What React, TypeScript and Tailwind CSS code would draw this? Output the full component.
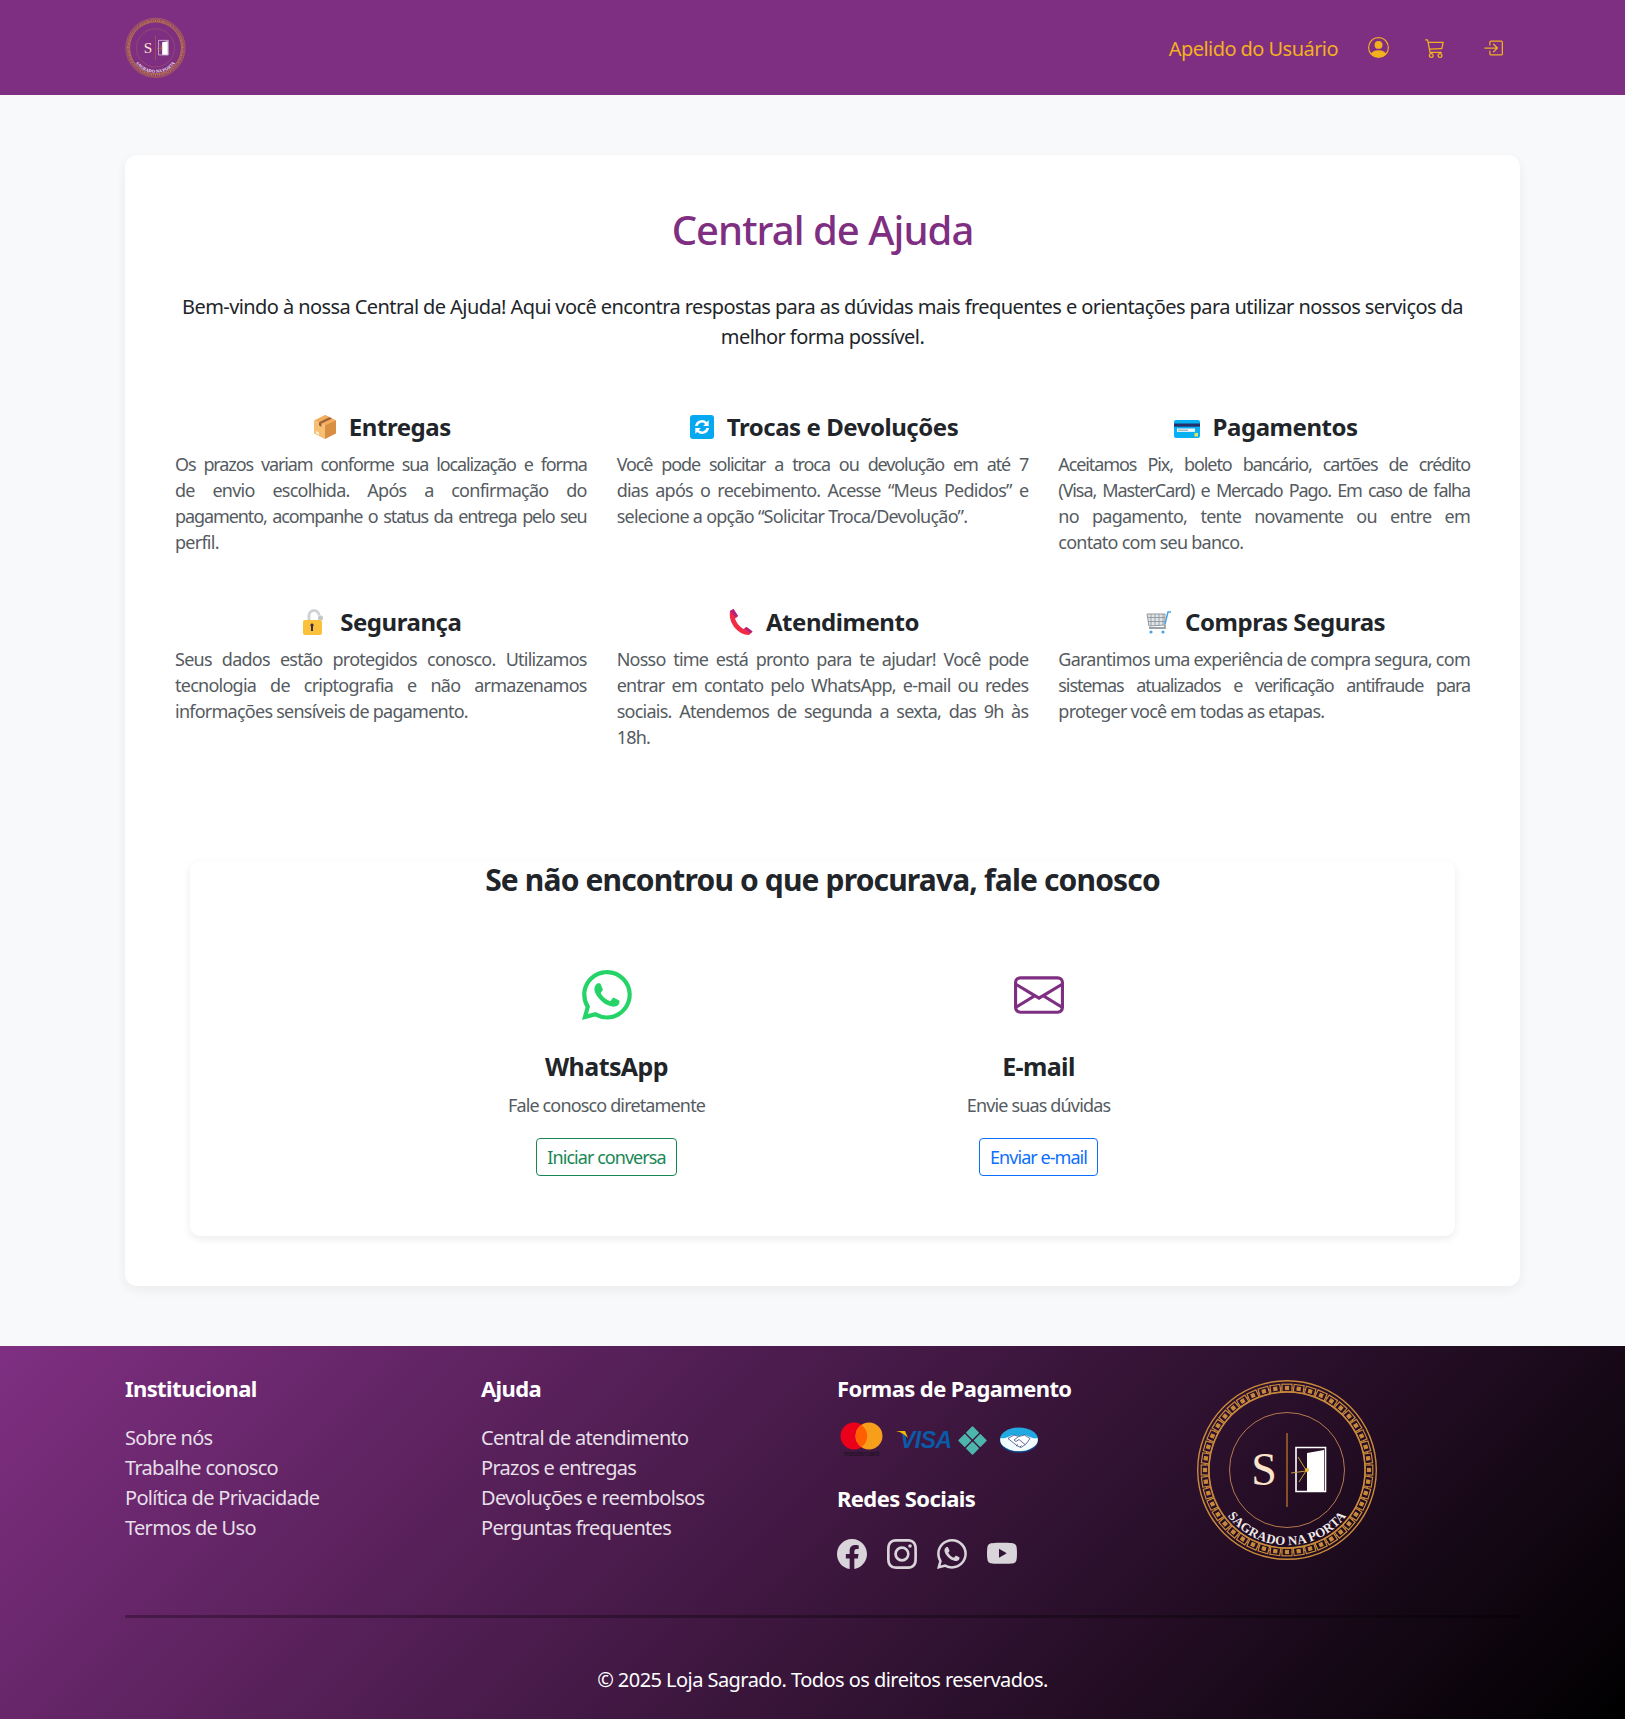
import React from "react";

const WA_PATH = "M13.601 2.326A7.85 7.85 0 0 0 7.994 0C3.627 0 .068 3.558.064 7.926c0 1.399.366 2.76 1.057 3.965L0 16l4.204-1.102a7.9 7.9 0 0 0 3.79.965h.004c4.368 0 7.926-3.558 7.93-7.93A7.9 7.9 0 0 0 13.6 2.326zM7.994 14.521a6.6 6.6 0 0 1-3.356-.92l-.24-.144-2.494.654.666-2.433-.156-.251a6.56 6.56 0 0 1-1.007-3.505c0-3.626 2.957-6.584 6.591-6.584a6.56 6.56 0 0 1 4.66 1.931 6.56 6.56 0 0 1 1.928 4.66c-.004 3.639-2.961 6.592-6.592 6.592m3.615-4.934c-.197-.099-1.17-.578-1.353-.646-.182-.065-.315-.099-.445.099-.133.197-.513.646-.627.775-.114.133-.232.148-.43.05-.197-.1-.836-.308-1.592-.985-.59-.525-.985-1.175-1.103-1.372-.114-.198-.011-.304.088-.403.087-.088.197-.232.296-.346.1-.114.133-.198.198-.33.065-.134.034-.248-.015-.347-.05-.099-.445-1.076-.612-1.47-.16-.389-.323-.335-.445-.34-.114-.007-.247-.007-.38-.007a.73.73 0 0 0-.529.247c-.182.198-.691.677-.691 1.654s.71 1.916.81 2.049c.098.133 1.394 2.132 3.383 2.992.47.205.84.326 1.129.418.475.152.904.129 1.246.08.38-.058 1.171-.48 1.338-.943.164-.464.164-.86.114-.943-.049-.084-.182-.133-.38-.232";

const KEY_UNITS = Array.from({ length: 44 }, (_, i) => (i * 360) / 44);

function Logo({ size, id }: { size: number; id: string }) {
  return (
    <svg width={size} height={size} viewBox="0 0 220 220" className="block">
      <defs>
        <path id={`arc-${id}`} d="M 33.1 118 A 75 75 0 0 0 180.9 118" fill="none" />
      </defs>
      <circle cx="107" cy="105" r="89.3" fill="none" stroke="#c98a3c" strokeWidth="1.4" />
      <circle cx="107" cy="105" r="78" fill="none" stroke="#c98a3c" strokeWidth="1.4" />
      {KEY_UNITS.map((a) => (
        <g key={a} transform={`rotate(${a} 107 105)`} fill="none" stroke="#c98a3c">
          <rect x="102" y="19.2" width="10" height="7.6" strokeWidth="1.2" />
          <rect x="105.4" y="21.4" width="3.2" height="3.2" strokeWidth="1" fill="#c98a3c" />
          <path d="M112 23h1.4" strokeWidth="1.2" />
        </g>
      ))}
      <circle cx="107" cy="105" r="57.5" fill="none" stroke="#b5784f" strokeWidth="1" />
      <text x="84" y="120" textAnchor="middle" fontFamily="'Liberation Serif', serif" fontSize="46" fill="#fbe3cb">S</text>
      <rect x="106.4" y="68" width="1.2" height="74" fill="#c77d28" />
      <path d="M116 82.5h29.5v44h-29.5z" fill="none" stroke="#fff" strokeWidth="1.6" />
      <path d="M127 88l17-3v41h-17z" fill="#fff" />
      <path d="M126 105l-8-13M126 106l-15 2M126 106l-7 11" stroke="#c9983f" strokeWidth="1" />
      <circle cx="127" cy="105" r="2" fill="#e8b93f" />
      <text fontFamily="'Liberation Serif', serif" fontSize="13" fontWeight="700" fill="#efe9ea" letterSpacing="0.2">
        <textPath href={`#arc-${id}`} startOffset="50%" textAnchor="middle">SAGRADO NA PORTA</textPath>
      </text>
    </svg>
  );
}

function EmojiBox() {
  return (
    <svg width="24" height="26" viewBox="0 0 24 26" className="shrink-0">
      <path d="M12 1 23 6.5v13L12 25z" fill="#d98f43" />
      <path d="M12 11.5V25L1 19.5v-13z" fill="#f6bf72" />
      <path d="M1 6.5 12 1l11 5.5L12 11.5z" fill="#f2ae5c" />
      <path d="M16.5 3.2 19 4.5 8.5 9.5 6 8.2z" fill="#9a5f38" />
      <path d="M6 8.2l2.5 1.3v3.2L6 11.4z" fill="#9a5f38" />
      <path d="M3 17l3 1.4v2.6L3 19.6z" fill="#fdf1de" />
    </svg>
  );
}
function EmojiSwap() {
  return (
    <svg width="26" height="26" viewBox="0 0 26 26" className="shrink-0">
      <rect x="1" y="1" width="24" height="24" rx="3" fill="#06a9f0" />
      <path d="M6 12a7 7 0 0 1 11.8-4l1.9-1.7V12h-5.6l2-2A4.4 4.4 0 0 0 8.6 12z" fill="#fff" />
      <path d="M20 14a7 7 0 0 1-11.8 4l-1.9 1.7V14h5.6l-2 2a4.4 4.4 0 0 0 7.5-2z" fill="#fff" />
    </svg>
  );
}
function EmojiCard() {
  return (
    <svg width="28" height="26" viewBox="0 0 28 26" className="shrink-0">
      <rect x="1" y="6" width="26" height="18" rx="2" fill="#06b0f2" />
      <rect x="1" y="9.5" width="26" height="3.2" fill="#25306b" />
      <rect x="4" y="14.5" width="18" height="3.4" fill="#f2f7fb" />
      <rect x="5" y="15.7" width="10" height="1" fill="#8b98a5" />
      <rect x="21.5" y="19" width="3.5" height="3.5" fill="#e6e45a" />
    </svg>
  );
}
function EmojiLock() {
  return (
    <svg width="26" height="28" viewBox="0 0 26 28" className="shrink-0">
      <path d="M7 13V7.500a5 5 0 0 1 10 0" fill="none" stroke="#d0d3d6" strokeWidth="3" />
      <rect x="16" y="7.500" width="5" height="5" rx="2" fill="#c3c7cb" />
      <rect x="1" y="12" width="19" height="15" rx="2" fill="#fcc13a" />
      <path d="M10 15.500a1.700 1.700 0 0 1 1 3V23H9v-4.500a1.700 1.700 0 0 1 1-3z" fill="#3a2c4a" />
    </svg>
  );
}
function EmojiPhone() {
  return (
    <svg width="26" height="28" viewBox="0 0 26 28" className="shrink-0">
      <path d="M2 3 5.500 1 10 8l-3 2.500c1 4 5.500 9 8.500 10.500l3-2 6 4.500-3.500 3.500C10 27 0 15 2 3z" fill="#f02d45" />
      <path d="M2 3 5.500 1 10 8l-2 1.700z" fill="#b4237e" />
      <path d="M18.500 19l6 4.500-2 2-6-5z" fill="#b4237e" />
    </svg>
  );
}
function EmojiCart() {
  return (
    <svg width="28" height="27" viewBox="0 0 28 27" className="shrink-0">
      <path d="M2 5h18v11L4 17z" fill="#e2e5e8" stroke="#8f979e" strokeWidth="1" />
      <path d="M6 5v12M10 5v11.500M14 5v11M18 5v11M3 8.500h17M3 12.500h17" stroke="#8f979e" strokeWidth="0.9" />
      <path d="M20 16v3H4" fill="none" stroke="#9aa1a8" strokeWidth="1.8" />
      <path d="M20 15 23 3h3" fill="none" stroke="#4da3e0" strokeWidth="1.5" />
      <circle cx="6" cy="23" r="1.600" fill="#4da3e0" />
      <circle cx="18" cy="23" r="1.600" fill="#4da3e0" />
    </svg>
  );
}

const faqs: { icon: React.ReactNode; title: string; lines: string[] }[] = [
  { icon: <EmojiBox />, title: "Entregas", lines: ["Os prazos variam conforme sua localização e forma", "de envio escolhida. Após a confirmação do", "pagamento, acompanhe o status da entrega pelo seu", "perfil."] },
  { icon: <EmojiSwap />, title: "Trocas e Devoluções", lines: ["Você pode solicitar a troca ou devolução em até 7", "dias após o recebimento. Acesse “Meus Pedidos” e", "selecione a opção “Solicitar Troca/Devolução”."] },
  { icon: <EmojiCard />, title: "Pagamentos", lines: ["Aceitamos Pix, boleto bancário, cartões de crédito", "(Visa, MasterCard) e Mercado Pago. Em caso de falha", "no pagamento, tente novamente ou entre em", "contato com seu banco."] },
  { icon: <EmojiLock />, title: "Segurança", lines: ["Seus dados estão protegidos conosco. Utilizamos", "tecnologia de criptografia e não armazenamos", "informações sensíveis de pagamento."] },
  { icon: <EmojiPhone />, title: "Atendimento", lines: ["Nosso time está pronto para te ajudar! Você pode", "entrar em contato pelo WhatsApp, e-mail ou redes", "sociais. Atendemos de segunda a sexta, das 9h às", "18h."] },
  { icon: <EmojiCart />, title: "Compras Seguras", lines: ["Garantimos uma experiência de compra segura, com", "sistemas atualizados e verificação antifraude para", "proteger você em todas as etapas."] },
];

function FooterLinks({ title, links }: { title: string; links: string[] }) {
  return (
    <div className="w-[356px] shrink-0">
      <h5 className="text-[22px] leading-[26px] font-bold tracking-[-0.6px] text-white mb-[22px]">{title}</h5>
      <ul className="text-[#e6dfe8] text-[20px] leading-[30px] tracking-[-0.7px]">
        {links.map((l) => (
          <li key={l}>{l}</li>
        ))}
      </ul>
    </div>
  );
}

export default function App() {
  return (
    <div className="min-h-[1719px] bg-[#f8f9fa] font-['Noto_Sans','Open_Sans',sans-serif] text-[#212529] flex flex-col">
      <header className="h-[95px] bg-[#7f2f82] pl-[120px] pr-[122px] flex items-center justify-between">
        <div className="mt-[4px]">
          <Logo size={73} id="head" />
        </div>
        <nav className="flex items-center text-[#f2b01e]">
          <span className="text-[20px] leading-[30px] mt-[2px] tracking-[-0.55px] mr-[30px]">Apelido do Usuário</span>
          <svg width="21" height="21" viewBox="0 0 16 16" fill="currentColor" className="mr-[36px]">
            <path d="M11 6a3 3 0 1 1-6 0 3 3 0 0 1 6 0" />
            <path fillRule="evenodd" d="M0 8a8 8 0 1 1 16 0A8 8 0 0 1 0 8m8-7a7 7 0 0 0-5.468 11.37C3.242 11.226 4.805 10 8 10s4.757 1.225 5.468 2.37A7 7 0 0 0 8 1" />
          </svg>
          <svg width="20" height="20" viewBox="0 0 16 16" fill="currentColor" className="mr-[38px]">
            <path d="M0 1.5A.5.5 0 0 1 .5 1H2a.5.5 0 0 1 .485.379L2.89 3H14.5a.5.5 0 0 1 .49.598l-1 5a.5.5 0 0 1-.465.401l-9.397.472L4.415 11H13a.5.5 0 0 1 0 1H4a.5.5 0 0 1-.491-.408L2.01 3.607 1.61 2H.5a.5.5 0 0 1-.5-.5M3.102 4l.84 4.479 9.144-.459L13.89 4zM5 12a2 2 0 1 0 0 4 2 2 0 0 0 0-4m7 0a2 2 0 1 0 0 4 2 2 0 0 0 0-4m-7 1a1 1 0 1 1 0 2 1 1 0 0 1 0-2m7 0a1 1 0 1 1 0 2 1 1 0 0 1 0-2" />
          </svg>
          <svg width="20" height="20" viewBox="0 0 16 16" fill="currentColor">
            <path fillRule="evenodd" d="M6 3.5a.5.5 0 0 1 .5-.5h8a.5.5 0 0 1 .5.5v9a.5.5 0 0 1-.5.5h-8a.5.5 0 0 1-.5-.5v-2a.5.5 0 0 0-1 0v2A1.5 1.5 0 0 0 6.5 14h8a1.5 1.5 0 0 0 1.5-1.5v-9A1.5 1.5 0 0 0 14.5 2h-8A1.5 1.5 0 0 0 5 3.5v2a.5.5 0 0 0 1 0z" />
            <path fillRule="evenodd" d="M11.854 8.354a.5.5 0 0 0 0-.708l-3-3a.5.5 0 1 0-.708.708L10.293 7.5H1.5a.5.5 0 0 0 0 1h8.793l-2.147 2.146a.5.5 0 0 0 .708.708z" />
          </svg>
        </nav>
      </header>

      <main className="pl-[125px] pr-[105px] pt-[60px] pb-[60px]">
        <section className="bg-white rounded-[12px] shadow-[0_4px_12px_rgba(0,0,0,0.06)] h-[1131px] pt-[49px] px-[50px]">
          <h1 className="text-center text-[40px] leading-[52px] font-medium tracking-[-0.95px] text-[#7f2f82]">Central de Ajuda</h1>
          <p className="mt-[36px] text-center text-[20px] leading-[30px] tracking-[-0.58px]">
            Bem-vindo à nossa Central de Ajuda! Aqui você encontra respostas para as dúvidas mais frequentes e orientações para utilizar nossos serviços da melhor forma possível.
          </p>
          <div className="mt-[59px] grid grid-cols-3 gap-x-[30px]">
            {faqs.map((f) => (
              <article key={f.title} className="h-[195px] min-w-0">
                <h4 className="flex items-center justify-center gap-[12px] pl-[2px] text-[24px] leading-[32px] font-bold tracking-[-0.45px]">
                  {f.icon}
                  {f.title}
                </h4>
                <p className="mt-[8px] text-[18px] leading-[26px] tracking-[-0.75px] text-[#555b61]">
                  {f.lines.map((line, i) => (
                    <span
                      key={line}
                      className={
                        i === f.lines.length - 1
                          ? "block"
                          : line.length >= 49
                            ? "block tracking-[-1.1px] [text-align:justify] [text-align-last:justify]"
                            : "block [text-align:justify] [text-align-last:justify]"
                      }
                    >
                      {line}
                    </span>
                  ))}
                </p>
              </article>
            ))}
          </div>
          <div className="mt-[60px] mx-[15px] h-[375px] rounded-[10px] bg-white shadow-[0_3px_8px_rgba(0,0,0,0.08)] flex flex-col items-center">
            <h3 className="text-[30px] leading-[38px] font-bold tracking-[-0.85px] text-center">Se não encontrou o que procurava, fale conosco</h3>
            <div className="mt-[71px] w-full grid grid-cols-[432px_432px] justify-center">
              <div className="flex flex-col items-center">
                <svg width="50" height="50" viewBox="0 0 16 16" fill="#25d366"><path d={WA_PATH} /></svg>
                <h4 className="mt-[30px] text-[25px] leading-[32px] font-bold tracking-[-0.6px]">WhatsApp</h4>
                <p className="mt-[10px] text-[18px] leading-[27px] tracking-[-0.85px] text-[#555b61]">Fale conosco diretamente</p>
                <a className="mt-[19px] h-[38px] px-[10px] flex items-center rounded-[4px] border border-[#198754] text-[#198754] text-[18px] tracking-[-0.95px]">Iniciar conversa</a>
              </div>
              <div className="flex flex-col items-center">
                <svg width="50" height="50" viewBox="0 0 16 16" fill="#7f2f82">
                  <path d="M0 4a2 2 0 0 1 2-2h12a2 2 0 0 1 2 2v8a2 2 0 0 1-2 2H2a2 2 0 0 1-2-2zm2-1a1 1 0 0 0-1 1v.217l7 4.2 7-4.2V4a1 1 0 0 0-1-1zm13 2.383-4.708 2.825L15 11.105zm-.034 6.876-5.64-3.471L8 9.583l-1.326-.795-5.64 3.47A1 1 0 0 0 2 13h12a1 1 0 0 0 .966-.741M1 11.105l4.708-2.897L1 5.383z" />
                </svg>
                <h4 className="mt-[30px] text-[25px] leading-[32px] font-bold tracking-[-0.6px]">E-mail</h4>
                <p className="mt-[10px] text-[18px] leading-[27px] tracking-[-0.85px] text-[#555b61]">Envie suas dúvidas</p>
                <a className="mt-[19px] h-[38px] px-[10px] flex items-center rounded-[4px] border border-[#0d6efd] text-[#0d6efd] text-[18px] tracking-[-0.95px]">Enviar e-mail</a>
              </div>
            </div>
          </div>
        </section>
      </main>

      <footer className="h-[373px] bg-[linear-gradient(135deg,#7f2f82_0%,#000000_100%)] pl-[125px] pr-[105px] pt-[29px] text-white flex flex-col">
        <div className="flex h-[232px]">
          <FooterLinks title="Institucional" links={["Sobre nós", "Trabalhe conosco", "Política de Privacidade", "Termos de Uso"]} />
          <FooterLinks title="Ajuda" links={["Central de atendimento", "Prazos e entregas", "Devoluções e reembolsos", "Perguntas frequentes"]} />
          <div className="w-[356px] shrink-0">
            <h5 className="text-[22px] leading-[26px] font-bold tracking-[-0.6px] mb-[19px]">Formas de Pagamento</h5>
            <div className="flex items-center h-[40px] pl-[3px]">
              <svg width="44" height="36" viewBox="0 0 44 36" className="mr-[12px]">
                <circle cx="14" cy="14" r="13.500" fill="#eb001b" />
                <circle cx="29" cy="14" r="13.500" fill="#f79e1b" />
                <path d="M21.500 3a13.500 13.500 0 0 1 0 22 13.500 13.500 0 0 1 0-22z" fill="#ff5f00" />
                <text x="21.500" y="34" textAnchor="middle" fontFamily="'Liberation Sans', sans-serif" fontSize="7" fill="#17101c">mastercard</text>
              </svg>
              <span className="relative text-[#0a5aa8] font-['Liberation_Sans',sans-serif] italic font-bold text-[23px] tracking-[-0.5px] w-[51px] leading-none mr-[10px] pl-[4px]">
                VISA
                <svg width="14" height="8" viewBox="0 0 14 8" className="absolute left-0 top-[2px]"><path d="M0 0h9l3 7C9 4 5 1 0 0z" fill="#f7b600" /></svg>
              </span>
              <svg width="31" height="31" viewBox="0 0 30 30" className="mr-[12px]">
                <g fill="#4db6ac" stroke="#4db6ac" strokeWidth="1.500" strokeLinejoin="round">
                  <path d="M15 2l5.500 5.500L15 13 9.500 7.500z" />
                  <path d="M15 17l5.500 5.500L15 28l-5.500-5.500z" />
                  <path d="M2 15l5.500-5.500L13 15l-5.500 5.500z" />
                  <path d="M17 15l5.500-5.500L28 15l-5.500 5.500z" />
                </g>
              </svg>
              <svg width="38" height="26" viewBox="0 0 38 26">
                <ellipse cx="19" cy="14" rx="19" ry="12" fill="#22346f" />
                <ellipse cx="19" cy="12.500" rx="19" ry="12" fill="#23a9e1" />
                <path d="M.5 11c6 1.500 9-3 14-3l4.500 1 4.500-1c5 0 8 4.500 14 3 1 4-1 7-5 9.500-4 2-6 3.500-13.500 3.500S9.500 22.500 5.500 20.500C1.500 18 -.500 15 .5 11z" fill="#f4fbff" />
                <path d="M8 11.500 14 8l5 1.500L24.500 8 30 11.500l-4 5.500-5 3.500-3.500-1.500z" fill="#fff" stroke="#22346f" strokeWidth="0.7" />
                <path d="M18 10l-4 3 2 1.500 3-2 6 5M16 19l2-1.500M20 20l1.500-1.500" fill="none" stroke="#22346f" strokeWidth="0.7" />
              </svg>
            </div>
            <h5 className="mt-[25px] text-[22px] leading-[26px] font-bold tracking-[-0.6px]">Redes Sociais</h5>
            <div className="mt-[28px] flex gap-[20px] text-[#d9d3da]">
              <svg width="30" height="30" viewBox="0 0 16 16" fill="currentColor"><path d="M16 8.049c0-4.446-3.582-8.05-8-8.05C3.58 0-.002 3.603-.002 8.05c0 4.017 2.926 7.347 6.75 7.951v-5.625h-2.03V8.05H6.75V6.275c0-2.017 1.195-3.131 3.022-3.131.876 0 1.791.157 1.791.157v1.98h-1.009c-.993 0-1.303.621-1.303 1.258v1.51h2.218l-.354 2.326H9.25V16c3.824-.604 6.75-3.934 6.75-7.951" /></svg>
              <svg width="30" height="30" viewBox="0 0 16 16" fill="currentColor"><path d="M8 0C5.829 0 5.556.01 4.703.048 3.85.088 3.269.222 2.76.42a3.9 3.9 0 0 0-1.417.923A3.9 3.9 0 0 0 .42 2.76C.222 3.268.087 3.85.048 4.7.01 5.555 0 5.827 0 8.001c0 2.172.01 2.444.048 3.297.04.852.174 1.433.372 1.942.205.526.478.972.923 1.417.444.445.89.719 1.416.923.51.198 1.09.333 1.942.372C5.555 15.99 5.827 16 8 16s2.444-.01 3.298-.048c.851-.04 1.434-.174 1.943-.372a3.9 3.9 0 0 0 1.416-.923c.445-.445.718-.891.923-1.417.197-.509.332-1.09.372-1.942C15.99 10.445 16 10.173 16 8s-.01-2.445-.048-3.299c-.04-.851-.175-1.433-.372-1.941a3.9 3.9 0 0 0-.923-1.417A3.9 3.9 0 0 0 13.24.42c-.51-.198-1.092-.333-1.943-.372C10.443.01 10.172 0 7.998 0zm-.717 1.442h.718c2.136 0 2.389.007 3.232.046.78.035 1.204.166 1.486.275.373.145.64.319.92.599s.453.546.598.92c.11.281.24.705.275 1.485.039.843.047 1.096.047 3.231s-.008 2.389-.047 3.232c-.035.78-.166 1.203-.275 1.485a2.5 2.5 0 0 1-.599.919c-.28.28-.546.453-.92.598-.28.11-.704.24-1.485.276-.843.038-1.096.047-3.232.047s-2.39-.009-3.233-.047c-.78-.036-1.203-.166-1.485-.276a2.5 2.5 0 0 1-.92-.598 2.5 2.5 0 0 1-.6-.92c-.109-.281-.24-.705-.275-1.485-.038-.843-.046-1.096-.046-3.233s.008-2.388.046-3.231c.036-.78.166-1.204.276-1.486.145-.373.319-.64.599-.92s.546-.453.92-.598c.282-.11.705-.24 1.485-.276.738-.034 1.024-.044 2.515-.045zm4.988 1.328a.96.96 0 1 0 0 1.92.96.96 0 0 0 0-1.92m-4.27 1.122a4.109 4.109 0 1 0 0 8.217 4.109 4.109 0 0 0 0-8.217m0 1.441a2.667 2.667 0 1 1 0 5.334 2.667 2.667 0 0 1 0-5.334" /></svg>
              <svg width="30" height="30" viewBox="0 0 16 16" fill="currentColor"><path d={WA_PATH} /></svg>
              <svg width="30" height="30" viewBox="0 0 16 16" fill="currentColor"><path d="M8.051 1.999h.089c.822.003 4.987.033 6.11.335a2.01 2.01 0 0 1 1.415 1.42c.101.38.172.883.22 1.402l.01.104.022.26.008.104c.065.914.073 1.77.074 1.957v.075c-.001.194-.01 1.108-.082 2.06l-.008.105-.009.104c-.05.572-.124 1.14-.235 1.558a2.01 2.01 0 0 1-1.415 1.42c-1.16.312-5.569.334-6.18.335h-.142c-.309 0-1.587-.006-2.927-.052l-.17-.006-.087-.004-.171-.007-.171-.007c-1.11-.049-2.167-.128-2.654-.26a2.01 2.01 0 0 1-1.415-1.419c-.111-.417-.185-.986-.235-1.558L.09 9.82l-.008-.104A31 31 0 0 1 0 7.68v-.123c.002-.215.01-.958.064-1.778l.007-.103.003-.052.008-.104.022-.26.01-.104c.048-.519.119-1.023.22-1.402a2.01 2.01 0 0 1 1.415-1.42c.487-.13 1.544-.21 2.654-.26l.17-.007.172-.006.086-.003.171-.007A100 100 0 0 1 7.858 2zM6.4 5.209v4.818l4.157-2.408z" /></svg>
            </div>
          </div>
          <div className="-ml-[13px] -mt-[10px]">
            <Logo size={220} id="foot" />
          </div>
        </div>
        <div className="mt-[8px] h-[3px] bg-black/30" />
        <p className="mt-[47px] text-center text-[20px] leading-[30px] tracking-[-0.55px]">© 2025 Loja Sagrado. Todos os direitos reservados.</p>
      </footer>
    </div>
  );
}
